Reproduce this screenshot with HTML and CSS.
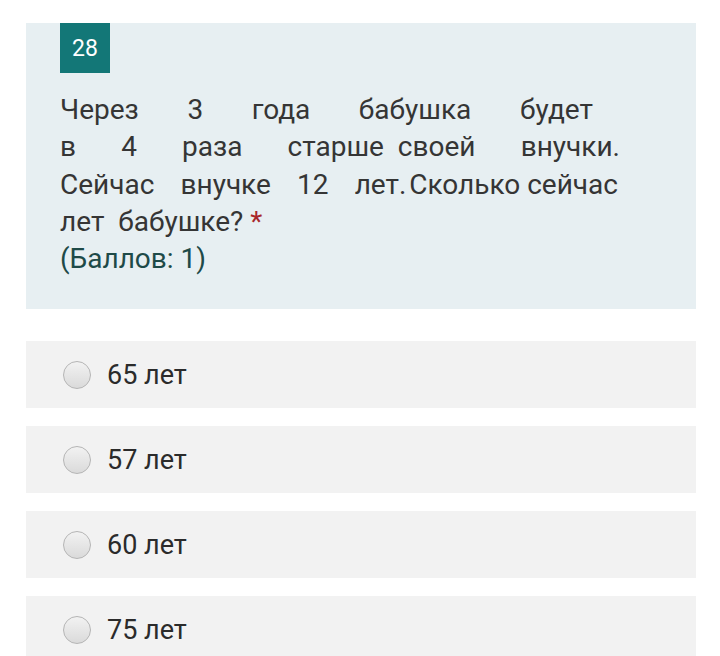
FILE: index.html
```html
<!DOCTYPE html>
<html lang="ru">
<head>
<meta charset="utf-8">
<link rel="stylesheet" href="styles.css">
</head>
<body>
<div class="page">
  <section class="question">
    <div class="badge">28</div>
    <div class="qtext">
      <div class="line l1"><span>Через</span><span>3</span><span>года</span><span>бабушка</span><span>будет</span></div>
      <div class="line l2"><span>в</span><span>4</span><span>раза</span><span>старше&nbsp; своей</span><span>внучки.</span></div>
      <div class="line l3"><span>Сейчас</span><span>внучке</span><span>12</span><span>лет.&#8202;Сколько сейчас</span></div>
      <div class="line">лет&nbsp; бабушке? <span class="req">*</span></div>
      <div class="line points">(Баллов: 1)</div>
    </div>
  </section>
  <div class="options">
    <label class="option"><span class="radio"></span><span class="otext">65 лет</span></label>
    <label class="option"><span class="radio"></span><span class="otext">57 лет</span></label>
    <label class="option"><span class="radio"></span><span class="otext">60 лет</span></label>
    <label class="option"><span class="radio"></span><span class="otext">75 лет</span></label>
  </div>
</div>
</body>
</html>
```
FILE: styles.css
```css
html, body {
  margin: 0;
  padding: 0;
  background: #ffffff;
}
body {
  font-family: Roboto, "Noto Sans", sans-serif;
  color: #333333;
  overflow: hidden;
}
.page {
  padding: 23px 24px 0 26px;
}
.question {
  background: #e7eff2;
  padding: 0 34px 32px 34px;
}
.badge {
  width: 50px;
  height: 50px;
  background: #137777;
  color: #ffffff;
  font-size: 23px;
  display: flex;
  align-items: center;
  justify-content: center;
}
.qtext {
  margin-top: 18px;
  font-size: 28px;
  line-height: 37.25px;
  color: #353535;
}
.line {
  white-space: nowrap;
}
.l1, .l2, .l3 {
  display: flex;
  justify-content: space-between;
}
.l1 { width: 533px; }
.l2 { width: 560px; }
.l3 { width: 558px; }
.req {
  color: #a8272b;
}
.points {
  color: #1e4a48;
}
.options {
  margin-top: 32px;
  display: flex;
  flex-direction: column;
  gap: 18px;
}
.option {
  height: 67px;
  background: #f2f2f2;
  display: flex;
  align-items: center;
  padding-left: 37px;
}
.radio {
  width: 28px;
  height: 28px;
  border-radius: 50%;
  border: 1px solid #b5b5b5;
  background: linear-gradient(#f2f2f2, #dadada);
  box-sizing: border-box;
  flex: none;
}
.otext {
  margin-left: 16px;
  font-size: 27px;
  color: #2b2b2b;
}
```
